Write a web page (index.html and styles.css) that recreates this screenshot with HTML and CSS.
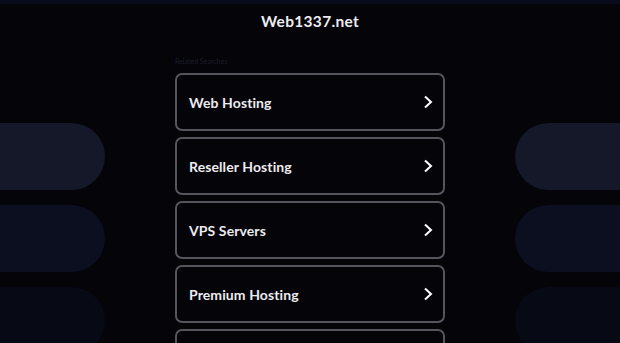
FILE: index.html
```html
<!DOCTYPE html>
<html lang="en">

<head>
    <meta charset="UTF-8">
    <meta name="viewport" content="width=device-width, initial-scale=1.0">
    <title>Web1337.net</title>
    <link rel="stylesheet" href="styles.css">
</head>

<body>
    <div class="top-bar"></div>
    <header>
        <h1>Web1337.net</h1>
    </header>
    <div class="layout">
        <div class="side side-left">
            <div class="pill pill-1"></div>
            <div class="pill pill-2"></div>
            <div class="pill pill-3"></div>
        </div>
        <div class="main">
            <p class="label">Related Searches</p>
            <a class="link" href="#">Web Hosting
                <svg width="12" height="14" viewBox="0 0 12 14"><path d="M3 1.5 L9 7 L3 12.5" /></svg>
            </a>
            <a class="link" href="#">Reseller Hosting
                <svg width="12" height="14" viewBox="0 0 12 14"><path d="M3 1.5 L9 7 L3 12.5" /></svg>
            </a>
            <a class="link" href="#">VPS Servers
                <svg width="12" height="14" viewBox="0 0 12 14"><path d="M3 1.5 L9 7 L3 12.5" /></svg>
            </a>
            <a class="link" href="#">Premium Hosting
                <svg width="12" height="14" viewBox="0 0 12 14"><path d="M3 1.5 L9 7 L3 12.5" /></svg>
            </a>
            <a class="link" href="#"></a>
        </div>
        <div class="side side-right">
            <div class="pill pill-1"></div>
            <div class="pill pill-2"></div>
            <div class="pill pill-3"></div>
        </div>
    </div>
</body>

</html>
```

FILE: styles.css
```css
body {
    margin: 0;
    background-color: #040409;
    font-family: Lato, "Open Sans", sans-serif;
    color: #ececf0;
    height: 343px;
    overflow: hidden;
}

.top-bar {
    height: 4px;
    background-color: #070b1a;
}

header {
    height: 36px;
    text-align: center;
}

header h1 {
    margin: 0;
    padding-top: 8px;
    font-size: 15.5px;
    font-weight: 700;
    letter-spacing: 0.3px;
    line-height: 18px;
}

.layout {
    display: grid;
    grid-template-columns: 105px 1fr 270px 1fr 105px;
    align-items: start;
}

.side-left {
    grid-column: 1;
}

.side-right {
    grid-column: 5;
}

.side {
    display: flex;
    flex-direction: column;
    gap: 15px;
    padding-top: 83px;
}

.pill {
    height: 67px;
}

.side-left .pill {
    border-radius: 0 34px 34px 0;
}

.side-right .pill {
    border-radius: 34px 0 0 34px;
}

.pill-1 {
    background-color: #141829;
}

.pill-2 {
    background-color: #0c0f1f;
}

.pill-3 {
    background-color: #070914;
}

.main {
    grid-column: 3;
    display: flex;
    flex-direction: column;
    gap: 6px;
}

.label {
    margin: 17px 0 1px;
    font-size: 7px;
    line-height: 9px;
    color: #1c1c2a;
}

.link {
    display: flex;
    align-items: center;
    justify-content: space-between;
    height: 54px;
    padding: 0 9px 0 12px;
    border: 2px solid #55565d;
    border-radius: 7px;
    color: #ececf0;
    text-decoration: none;
    font-size: 14px;
    font-weight: 700;
    letter-spacing: 0.1px;
}

.link svg path {
    fill: none;
    stroke: #ffffff;
    stroke-width: 2;
}
```
